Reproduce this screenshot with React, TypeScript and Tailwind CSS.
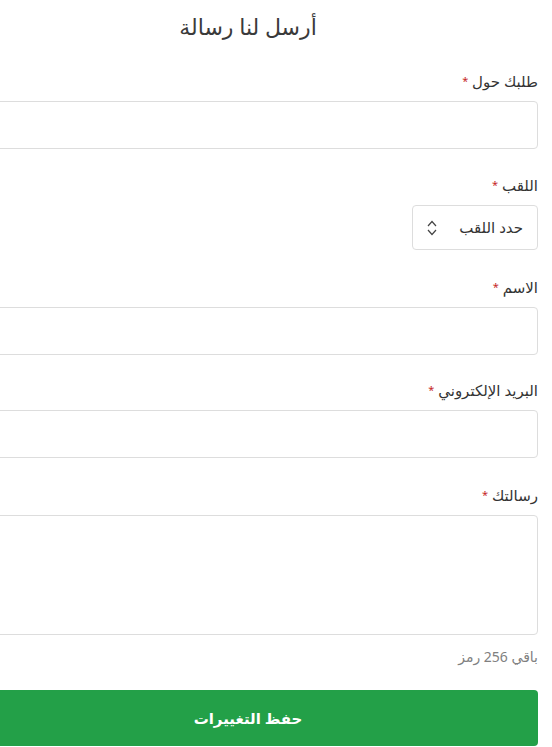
import { useState } from 'react';

const arabic = { fontFamily: '"Noto Sans", "DejaVu Sans", sans-serif' };

function Label({ text }: { text: string }) {
  return (
    <label className="mb-[9px] block h-[22px] text-[15px] leading-[22px] text-[#333]">
      {text} <span className="text-[11px] text-[#c62828] align-top">*</span>
    </label>
  );
}

export default function App() {
  const [message, setMessage] = useState('');
  const remaining = 256 - message.length;

  return (
    <div dir="rtl" className="min-h-screen overflow-hidden bg-white pr-[14px]" style={arabic}>
      <form className="w-[580px]" onSubmit={(e) => e.preventDefault()}>
        {/* Header */}
        <h2 className="h-[51px] pt-[10px] text-center text-[22px] leading-[32px] text-[#3a3a3a]">
          أرسل لنا رسالة
        </h2>

        <div className="pt-[19px]">
          <Label text="طلبك حول" />
          <input className="block h-12 w-full rounded border border-[#ddd] px-3 text-[15px] outline-none" />
        </div>

        <div className="pt-[25px]">
          <Label text="اللقب" />
          <div className="flex h-[45px] w-[126px] items-center justify-between rounded border border-[#ddd] pl-[14px] pr-[14px] text-[15px] text-[#333]">
            <span>حدد اللقب</span>
            <svg width="10" height="18" viewBox="0 0 10 18" fill="none" stroke="#444" strokeWidth="1.2">
              <path d="M1 7 L5 2.5 L9 7" />
              <path d="M1 11 L5 15.5 L9 11" />
            </svg>
          </div>
        </div>

        <div className="pt-[26px]">
          <Label text="الاسم" />
          <input className="block h-12 w-full rounded border border-[#ddd] px-3 text-[15px] outline-none" />
        </div>

        <div className="pt-[24px]">
          <Label text="البريد الإلكتروني" />
          <input className="block h-12 w-full rounded border border-[#ddd] px-3 text-[15px] outline-none" />
        </div>

        <div className="pt-[26px]">
          <Label text="رسالتك" />
          <textarea
            value={message}
            onChange={(e) => setMessage(e.target.value.slice(0, 256))}
            className="block h-[120px] w-full resize-none rounded border border-[#ddd] px-3 py-2 text-[15px] outline-none"
          />
          <p className="mt-3 h-5 text-[14px] leading-5 text-[#808080]">باقي {remaining} رمز</p>
        </div>

        {/* Save */}
        <button
          type="submit"
          className="mt-[23px] block h-14 w-full rounded bg-[#23a048] text-[15px] font-bold text-white"
        >
          حفظ التغييرات
        </button>
      </form>
    </div>
  );
}
